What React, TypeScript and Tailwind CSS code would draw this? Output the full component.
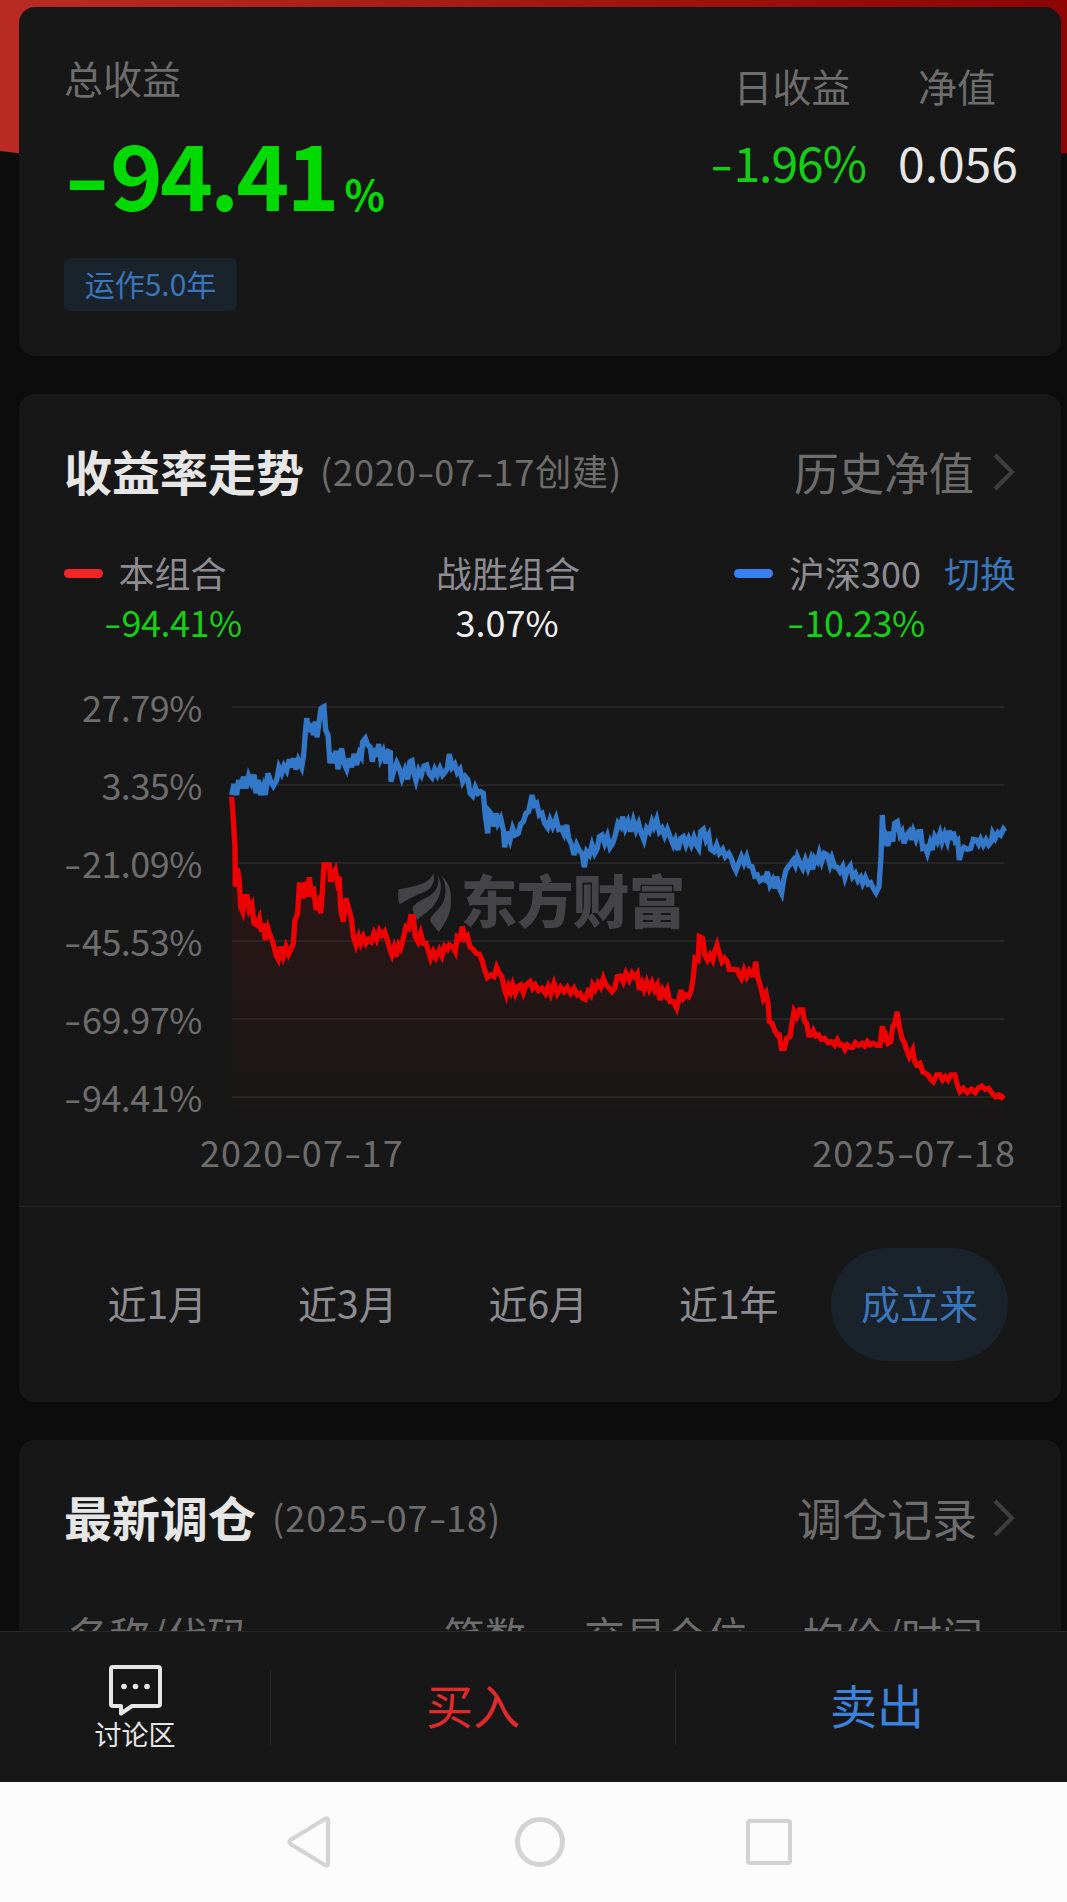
import React from 'react';

const yLabels = ['27.79%', '3.35%', '-21.09%', '-45.53%', '-69.97%', '-94.41%'];
const gridLines = [81, 315, 549, 783, 1017, 1251];
const ranges = ['近1月', '近3月', '近6月', '近1年', '成立来'];

// Chart units are a third of a pixel
const indexLine =
  '65,345 72,312 80,345 86,300 94,325 100,290 108,325 116,288 124,308 132,284 138,340 145,300 152,345 160,320 166,345 174,280 182,305 190,318 200,300 207,262 215,280 222,258 230,272 238,238 244,262 250,235 258,268 265,240 275,262 281,225 285,170 290,115 297,155 304,130 310,165 316,125 321,172 328,120 333,85 342,80 347,150 354,165 360,250 366,220 372,250 378,212 384,268 390,225 395,205 402,250 410,268 418,235 425,262 432,222 440,255 448,220 454,230 458,185 466,175 473,195 480,200 487,245 494,205 500,230 506,192 512,235 520,215 528,250 535,215 541,218 543,305 552,270 560,248 568,265 576,295 585,270 593,298 600,245 606,242 612,280 618,302 626,270 634,285 642,258 650,255 658,282 666,292 674,268 682,285 690,265 698,285 706,275 712,265 718,222 726,262 734,252 742,278 750,268 758,305 766,290 774,300 780,340 788,348 796,322 804,340 812,335 820,340 825,400 833,460 838,395 846,405 852,440 858,400 864,430 872,415 880,450 884,502 892,455 900,480 908,445 916,465 925,460 932,432 940,425 948,400 956,395 966,345 973,375 980,370 988,405 996,400 1004,430 1013,443 1020,420 1028,440 1038,415 1046,448 1054,445 1062,462 1070,435 1076,475 1085,495 1092,525 1100,495 1108,512 1116,520 1123,562 1130,515 1138,525 1146,495 1154,520 1162,505 1168,470 1176,465 1184,490 1192,468 1200,502 1208,490 1216,465 1224,430 1232,440 1238,410 1246,445 1254,425 1262,455 1270,422 1278,450 1286,430 1294,460 1302,480 1310,445 1318,455 1326,425 1332,440 1340,418 1348,455 1356,445 1364,468 1372,448 1382,475 1390,495 1396,480 1404,510 1412,475 1420,470 1428,495 1436,475 1444,495 1452,472 1460,495 1466,505 1472,455 1480,448 1488,480 1496,465 1502,508 1512,515 1520,495 1528,520 1538,508 1546,530 1556,520 1564,535 1572,560 1578,572 1586,550 1594,530 1602,550 1610,530 1618,558 1626,560 1634,588 1642,585 1650,602 1658,595 1666,600 1672,575 1680,615 1688,600 1695,625 1700,590 1708,625 1715,640 1721,600 1728,570 1735,560 1743,550 1750,540 1756,555 1762,530 1770,550 1778,565 1786,540 1794,565 1802,540 1808,568 1814,535 1822,545 1828,520 1835,545 1843,520 1852,525 1860,555 1866,535 1874,560 1882,562 1890,575 1898,560 1905,592 1912,570 1921,558 1928,590 1936,580 1944,602 1952,592 1958,610 1966,592 1974,612 1982,608 1990,625 1998,638 2007,620 2013,530 2017,405 2022,495 2028,475 2034,498 2040,455 2048,485 2054,430 2062,425 2070,465 2076,455 2082,490 2090,465 2098,455 2104,480 2110,455 2118,478 2126,455 2132,455 2138,505 2146,502 2152,520 2160,490 2166,510 2174,470 2182,485 2190,460 2196,485 2204,462 2212,485 2218,452 2224,480 2230,455 2236,485 2243,480 2248,540 2254,515 2262,502 2272,508 2282,505 2290,478 2300,480 2306,492 2312,478 2320,495 2328,480 2336,495 2344,485 2348,460 2356,475 2364,458 2372,465 2380,448 2385,455';
const portfolioLine =
  '65,350 70,420 75,500 76,620 82,565 88,600 92,680 98,695 105,650 112,650 118,690 126,675 132,730 140,735 148,715 154,755 160,730 166,780 174,745 182,770 190,790 198,825 205,838 212,800 220,828 228,800 236,822 244,805 250,790 255,720 263,700 268,615 274,615 280,655 288,605 292,650 298,592 304,650 310,620 318,690 325,670 332,700 338,620 342,555 358,555 362,605 368,585 376,570 382,605 388,590 392,690 400,725 408,655 416,685 424,715 430,770 438,795 446,770 452,790 460,770 468,790 476,778 484,785 492,760 500,778 508,752 516,765 524,755 532,780 540,810 546,825 552,805 558,830 566,795 572,805 580,775 588,740 596,745 602,710 610,710 616,770 624,785 632,760 640,790 648,790 656,815 662,835 670,815 678,832 688,810 696,828 704,800 712,808 718,795 728,800 736,815 742,770 750,775 757,740 765,775 772,768 780,800 790,808 798,820 808,822 816,840 824,870 832,893 842,885 852,890 860,862 868,880 876,890 884,930 889,945 896,920 902,935 908,915 916,940 924,920 932,915 940,938 948,915 960,905 968,925 976,915 986,932 996,925 1006,940 1014,920 1022,942 1032,910 1042,940 1052,922 1062,935 1072,922 1082,940 1092,925 1102,945 1110,940 1118,955 1126,958 1134,935 1142,945 1148,915 1156,928 1164,910 1172,922 1180,895 1188,915 1198,925 1206,935 1214,925 1222,890 1232,888 1240,905 1248,880 1258,900 1266,880 1274,890 1282,880 1288,930 1296,910 1302,928 1310,905 1318,928 1326,908 1334,930 1342,915 1350,960 1358,930 1366,945 1372,930 1380,965 1390,965 1400,985 1406,960 1413,930 1420,955 1428,945 1436,950 1444,930 1450,890 1455,835 1464,840 1468,770 1478,775 1484,825 1492,840 1500,825 1508,840 1514,815 1521,795 1528,820 1536,845 1544,835 1552,845 1558,868 1570,868 1582,870 1588,885 1594,895 1602,870 1610,890 1618,872 1626,885 1632,885 1637,845 1644,895 1652,920 1660,955 1668,940 1674,970 1678,1025 1686,1030 1694,1050 1702,1065 1708,1065 1714,1105 1723,1105 1730,1075 1740,1070 1746,1030 1752,995 1760,1010 1768,990 1778,990 1784,1025 1790,1030 1796,1065 1804,1065 1810,1052 1818,1068 1826,1065 1834,1078 1844,1075 1854,1088 1864,1085 1874,1095 1882,1080 1890,1095 1898,1095 1905,1108 1912,1095 1920,1102 1928,1102 1936,1088 1946,1096 1956,1090 1964,1098 1972,1085 1980,1095 1990,1090 2000,1096 2010,1096 2017,1038 2022,1085 2028,1070 2034,1090 2042,1085 2048,1040 2054,1030 2061,995 2068,1040 2076,1075 2084,1090 2090,1110 2098,1130 2108,1110 2114,1145 2120,1155 2130,1150 2138,1175 2146,1180 2154,1185 2162,1198 2170,1205 2180,1185 2190,1185 2198,1200 2206,1190 2214,1200 2222,1185 2235,1185 2242,1215 2250,1235 2260,1225 2272,1238 2284,1228 2296,1238 2304,1225 2316,1218 2326,1228 2336,1225 2346,1240 2356,1250 2366,1245 2374,1252 2382,1245';

// Numbers are set with a wide hyphen
const Num: React.FC<{ children: string }> = ({ children }) => (
  <>
    {children.split(/(-)/).map((part, i) =>
      part === '-' ? (
        <span key={i} className="inline-block scale-x-[1.4] px-[0.07em] tracking-normal">
          -
        </span>
      ) : (
        part
      )
    )}
  </>
);

const Chevron: React.FC = () => (
  <svg className="mt-1 ml-[18px] h-[40px] w-[26px]" viewBox="0 0 26 40" fill="none">
    <path d="M3 3L20 20L3 37" stroke="#3f3f3f" strokeWidth="4" />
  </svg>
);

const Chart: React.FC = () => (
  <svg className="mt-[13px] ml-2 h-[440px] w-[810px] shrink-0" viewBox="0 0 2430 1320">
    <defs>
      <linearGradient id="area" gradientUnits="userSpaceOnUse" x1="0" y1="350" x2="0" y2="1290">
        <stop offset="0" stopColor="#f00000" stopOpacity="0.12" />
        <stop offset="1" stopColor="#f00000" stopOpacity="0.01" />
      </linearGradient>
    </defs>
    {gridLines.map((y) => (
      <line key={y} x1="66" x2="2382" y1={y} y2={y} stroke="#252525" strokeWidth="6" />
    ))}
    <g fill="#444347">
      <g transform="translate(510 540)">
        <path d="M56 88C100 78 150 75 160 38C165 62 160 85 130 97C100 108 75 125 58 132C54 120 53 100 56 88Z" />
        <path d="M168 38C176 50 178 62 172 80C160 115 115 115 98 142C98 160 106 170 112 180C130 160 165 150 180 100C186 80 182 55 168 38Z" />
        <path d="M182 44C205 65 215 90 213 125C212 165 195 190 176 216C165 200 150 190 150 178C165 150 200 140 196 85C195 65 190 55 182 44Z" />
      </g>
      <text x="752" y="730" fontSize="170" fontWeight="900" textLength="674">
        东方财富
      </text>
    </g>
    <polygon points={`${portfolioLine} 2382,1290 66,1290`} fill="url(#area)" />
    <polyline points={indexLine} fill="none" stroke="#3277c8" strokeWidth="16" strokeLinejoin="miter" />
    <polyline points={portfolioLine} fill="none" stroke="#ec0000" strokeWidth="16" strokeLinejoin="miter" />
  </svg>
);

const Summary: React.FC = () => (
  <section className="flex h-[349px] shrink-0 justify-between rounded-2xl bg-[#171717] pt-[42px] pr-[45px] pl-[45px]">
    <div>
      <div className="text-[39px] leading-[56px] text-[#6d6d6d]">总收益</div>
      <div className="mt-[22px] flex h-[90px] items-baseline font-bold text-[#00da00]">
        <span className="text-[90px] leading-[90px] tracking-[-3px]">
          <Num>-94.41</Num>
        </span>
        <span className="ml-2 text-[42px] leading-none">%</span>
      </div>
      <div className="mt-[41px] flex h-[53px] w-[173px] items-center justify-center rounded-md bg-[#1a222b] pb-[3px] text-[30px] text-[#3a76bb]">
        运作5.0年
      </div>
    </div>
    <div className="mt-2 flex gap-[31px] text-center whitespace-nowrap">
      <div className="w-[150px]">
        <div className="text-[39px] leading-[56px] text-[#6d6d6d]">日收益</div>
        <div className="mt-[18px] -ml-2 text-[48px] leading-[60px] tracking-[-1px] text-[#15cf15]">
          <Num>-1.96%</Num>
        </div>
      </div>
      <div className="w-[118px]">
        <div className="text-[39px] leading-[56px] text-[#6d6d6d]">净值</div>
        <div className="mt-[18px] text-[48px] leading-[60px] text-[#e6e6e6]">0.056</div>
      </div>
    </div>
  </section>
);

const Trend: React.FC = () => (
  <section className="flex h-[1008px] shrink-0 flex-col rounded-2xl bg-[#171717] pt-[46px]">
    <div className="flex h-[60px] items-center pr-[43px] pl-[45px] whitespace-nowrap">
      <h2 className="text-[48px] font-bold text-[#e6e6e6]">收益率走势</h2>
      <span className="ml-4 text-[36px] tracking-[0.9px] text-[#6d6d6d]">
        <Num>(2020-07-17创建)</Num>
      </span>
      <span className="mt-1 ml-auto text-[45px] text-[#6d6d6d]">历史净值</span>
      <Chevron />
    </div>

    <div className="mt-[48px] flex pl-[45px] text-center text-[36px] leading-[49px] whitespace-nowrap text-[#8d8c92]">
      <span className="mt-[21px] h-[9px] w-[39px] rounded-full bg-[#f22626]" />
      <div className="ml-px w-[137px]">
        <div>本组合</div>
        <div className="tracking-[-0.5px] text-[#15cf15]">
          <Num>-94.41%</Num>
        </div>
      </div>
      <div className="ml-[195px] w-[142px]">
        <div>战胜组合</div>
        <div className="text-[#f0f0f0]">3.07%</div>
      </div>
      <span className="mt-[21px] ml-[156px] h-[9px] w-[39px] rounded-full bg-[#3b80f0]" />
      <div className="ml-[14px] w-[136px]">
        <div>沪深300</div>
        <div className="tracking-[-0.5px] text-[#15cf15]">
          <Num>-10.23%</Num>
        </div>
      </div>
      <div className="ml-[21px] text-[#3a76bb]">切换</div>
    </div>

    <div className="mt-[21px] flex h-[468px] pl-[45px]">
      <div className="w-[138px] shrink-0 text-right text-[36px] leading-[78px] tracking-[-0.5px] whitespace-nowrap text-[#6d6d6d]">
        {yLabels.map((label) => (
          <div key={label}>
            <Num>{label}</Num>
          </div>
        ))}
      </div>
      <Chart />
    </div>
    <div className="-mt-[2px] flex justify-between pr-[45px] pl-[181px] text-[36px] leading-[36px] tracking-[1.1px] text-[#6d6d6d]">
      <span>
        <Num>2020-07-17</Num>
      </span>
      <span>
        <Num>2025-07-18</Num>
      </span>
    </div>

    <div className="mt-[37px] flex flex-1 items-center border-t border-[#262626] pl-[43px] text-[39px] text-[#8d8c92]">
      {ranges.map((range) =>
        range === '成立来' ? (
          <div key={range} className="flex w-[191px] justify-center">
            <span className="flex h-[113px] w-[177px] items-center justify-center rounded-full bg-[#1a222b] pb-1 text-[#3a76bb]">
              {range}
            </span>
          </div>
        ) : (
          <div key={range} className="w-[190.5px] pb-1 text-center">
            {range}
          </div>
        )
      )}
    </div>
  </section>
);

const Rebalance: React.FC = () => (
  <section className="h-[300px] shrink-0 rounded-t-2xl bg-[#171717] pt-[46px]">
    <div className="flex h-[60px] items-center pr-[43px] pl-[45px] whitespace-nowrap">
      <h2 className="text-[48px] font-bold text-[#e6e6e6]">最新调仓</h2>
      <span className="ml-4 text-[36px] tracking-[1px] text-[#6d6d6d]">
        <Num>(2025-07-18)</Num>
      </span>
      <span className="mt-1 -mr-[3px] ml-auto text-[45px] text-[#6d6d6d]">调仓记录</span>
      <Chevron />
    </div>
    <div className="mt-[63px] flex pl-[49px] text-[41px] leading-[50px] whitespace-nowrap text-[#6d6d6d]">
      <span className="w-[376px]">名称/代码</span>
      <span className="w-[140px]">笔数</span>
      <span className="w-[219px]">交易仓位</span>
      <span>均价/时间</span>
    </div>
  </section>
);

const App: React.FC = () => {
  return (
    <div className="relative flex h-[1902px] w-[1067px] flex-col overflow-hidden bg-[#0c0c0c] font-['Noto_Sans_CJK_SC',sans-serif]">
      <svg className="absolute top-0 left-0 h-[180px] w-[1067px]" viewBox="0 0 1067 180">
        <defs>
          <linearGradient id="banner" x1="0" y1="0" x2="1" y2="0">
            <stop offset="0" stopColor="#ba2c23" />
            <stop offset="1" stopColor="#8c0404" />
          </linearGradient>
        </defs>
        <path d="M0 0H1067V153Q533 220 0 151Z" fill="url(#banner)" />
      </svg>

      <main className="relative flex h-[1631px] shrink-0 flex-col gap-[38px] overflow-hidden pt-[7px] pr-[6px] pl-[19px]">
        <Summary />
        <Trend />
        <Rebalance />
      </main>

      <div className="relative flex h-[151px] shrink-0 items-center overflow-hidden border-t border-[#282828] bg-[#171717]">
        <div className="flex w-[270px] shrink-0 flex-col items-center text-[#e6e6e6]">
          <svg className="mt-[2px] h-[52px] w-[53px]" viewBox="0 0 53 52" fill="none">
            <path
              d="M4 2H49Q51 2 51 4V39Q51 41 49 41H23L12 48.500V41H4Q2 41 2 39V4Q2 2 4 2Z"
              stroke="currentColor"
              strokeWidth="4"
              strokeLinejoin="round"
            />
            <circle cx="15" cy="21.500" r="2.800" fill="currentColor" />
            <circle cx="26.500" cy="21.500" r="2.800" fill="currentColor" />
            <circle cx="38" cy="21.500" r="2.800" fill="currentColor" />
          </svg>
          <span className="text-[27px] leading-[34px]">讨论区</span>
        </div>
        <div className="h-[75px] w-px shrink-0 bg-[#282828]" />
        <div className="w-[404px] shrink-0 pb-1.5 text-center text-[47px] text-[#e02b2b]">买入</div>
        <div className="h-[75px] w-px shrink-0 bg-[#282828]" />
        <div className="w-[402px] shrink-0 pb-1.5 text-center text-[47px] text-[#3c82dc]">卖出</div>
      </div>

      <nav className="flex flex-1 items-center bg-[#fcfcfc] pl-[286px]">
        <svg className="h-[54px] w-[46px]" viewBox="0 0 46 54" fill="none">
          <path d="M42 5V49Q42 51.500 39.500 50.500L4.500 29Q2 27 4.500 25L39.500 3.500Q42 2.500 42 5Z" stroke="#d3d3d3" strokeWidth="4" />
        </svg>
        <span className="ml-[183px] h-[50px] w-[50px] rounded-full border-[5px] border-[#d3d3d3]" />
        <span className="ml-[181px] h-[46px] w-[46px] rounded-[4px] border-4 border-[#d3d3d3]" />
      </nav>
    </div>
  );
};

export default App;
